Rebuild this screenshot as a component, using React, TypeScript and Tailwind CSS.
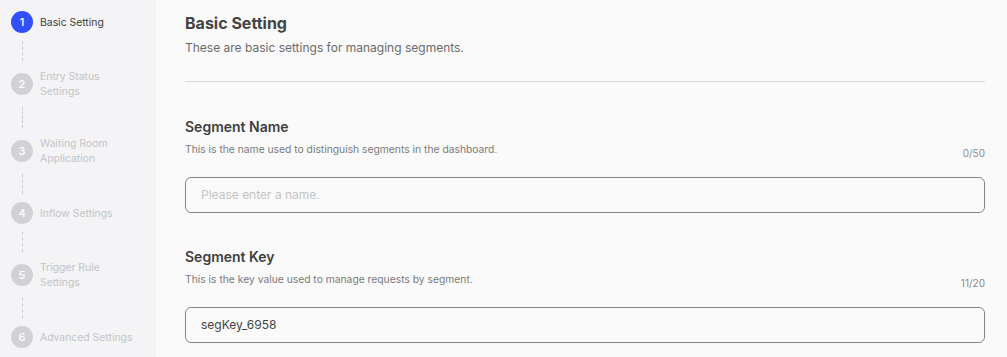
import { Fragment } from "react";

type Step = { no: number; label: string[]; active?: boolean };

const steps: Step[] = [
  { no: 1, label: ["Basic Setting"], active: true },
  { no: 2, label: ["Entry Status", "Settings"] },
  { no: 3, label: ["Waiting Room", "Application"] },
  { no: 4, label: ["Inflow Settings"] },
  { no: 5, label: ["Trigger Rule", "Settings"] },
  { no: 6, label: ["Advanced Settings"] },
];

function StepItem({ step }: { step: Step }) {
  return (
    <div className="flex items-center gap-[7px]">
      <div
        className={
          step.active
            ? "flex h-[22px] w-[22px] shrink-0 items-center justify-center rounded-full bg-[#3150fb] text-[11px] font-medium text-white"
            : "flex h-[22px] w-[22px] shrink-0 items-center justify-center rounded-full bg-[#d2d2d6] text-[11px] font-medium text-white"
        }
      >
        {step.no}
      </div>
      <div className={step.active ? "text-[10.4px] leading-[15px] text-[#3c3c3c]" : "text-[10.4px] leading-[15px] text-[#c3c3c7]"}>
        {step.label.map((l) => (
          <div key={l}>{l}</div>
        ))}
      </div>
    </div>
  );
}

function Field({
  title,
  desc,
  count,
  value,
  placeholder,
}: {
  title: string;
  desc: string;
  count: string;
  value?: string;
  placeholder?: string;
}) {
  return (
    <div>
      <div className="text-[14px] font-semibold leading-[20px] text-[#3f3f3f]">{title}</div>
      <div className="mt-[4px] flex items-start justify-between">
        <div className="text-[10.3px] leading-[17px] text-[#7a7a7a]">{desc}</div>
        <div className="pt-[4px] text-[10px] leading-[16px] text-[#8a8a8a]">{count}</div>
      </div>
      <div className="mt-[16px] flex h-[36px] w-full items-center rounded-[6px] border border-[#858585] bg-[#fafafa] px-[15px] text-[12px]">
        {value ? (
          <span className="text-[#444]">{value}</span>
        ) : (
          <span className="text-[#c4c4c4]">{placeholder}</span>
        )}
      </div>
    </div>
  );
}

export default function App() {
  return (
    <div className="flex h-[357px] w-full overflow-hidden font-['Inter',sans-serif]">
      {/* Sidebar steps */}
      <aside className="w-[156px] shrink-0 bg-[#f4f4f6] px-[11px] pt-[11px]">
        {steps.map((s, i) => (
          <Fragment key={s.no}>
            <StepItem step={s} />
            {i < steps.length - 1 && (
              <div
                className={
                  i === 1
                    ? "flex h-[37px] w-[22px] justify-center py-[8px]"
                    : "flex h-[36px] w-[22px] justify-center py-[8px]"
                }
              >
                <div className="h-full border-l border-dashed border-[#c8c8cc]" />
              </div>
            )}
          </Fragment>
        ))}
      </aside>

      {/* Main content */}
      <main className="flex-1 bg-[#fafafa] pl-[29px] pr-[22px] pt-[11px]">
        <h1 className="text-[16px] font-bold leading-[24px] text-[#444]">Basic Setting</h1>
        <p className="mt-[3px] text-[12px] leading-[20px] text-[#6b6b6b]">
          These are basic settings for managing segments.
        </p>
        <div className="mt-[23px] border-t border-[#d9d9d9]" />

        <div className="mt-[35px]">
          <Field
            title="Segment Name"
            desc="This is the name used to distinguish segments in the dashboard."
            count="0/50"
            placeholder="Please enter a name."
          />
        </div>
        <div className="mt-[34px]">
          <Field
            title="Segment Key"
            desc="This is the key value used to manage requests by segment."
            count="11/20"
            value="segKey_6958"
          />
        </div>
      </main>
    </div>
  );
}
